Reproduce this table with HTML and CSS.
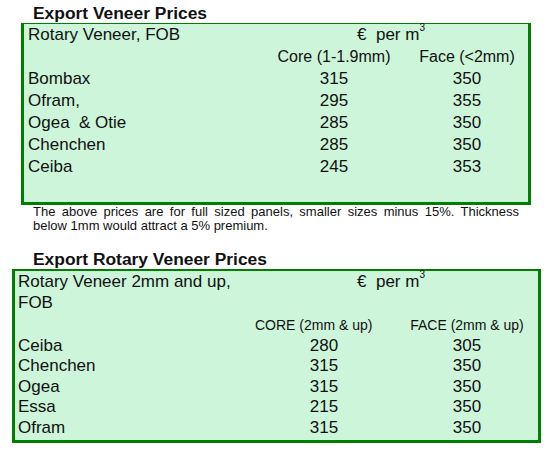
FILE: index.html
```html
<!DOCTYPE html>
<html>
<head>
<meta charset="utf-8">
<link rel="stylesheet" href="styles.css">
</head>
<body>
<div class="page">
  <h2 class="title title-first">Export Veneer Prices</h2>
  <div class="box box-one">
    <div class="label">Rotary Veneer, FOB</div>
    <div class="unit">€ &nbsp;per m<sup>3</sup></div>

    <div class="label"></div>
    <div class="colhead">Core (1-1.9mm)</div>
    <div class="colhead c3">Face (&lt;2mm)</div>

    <div class="label">Bombax</div><div class="num">315</div><div class="num c3">350</div>
    <div class="label">Ofram,</div><div class="num">295</div><div class="num c3">355</div>
    <div class="label">Ogea &nbsp;&amp; Otie</div><div class="num">285</div><div class="num c3">350</div>
    <div class="label">Chenchen</div><div class="num">285</div><div class="num c3">350</div>
    <div class="label">Ceiba</div><div class="num">245</div><div class="num c3">353</div>
  </div>
  <p class="note">The above prices are for full sized panels, smaller sizes minus 15%. Thickness below 1mm would attract a 5% premium.</p>

  <h2 class="title title-second">Export Rotary Veneer Prices</h2>
  <div class="box box-two">
    <div class="label">Rotary Veneer 2mm and up, FOB</div>
    <div class="unit">€ &nbsp;per m<sup>3</sup></div>

    <div class="label"></div>
    <div class="colhead left">CORE (2mm &amp; up)</div>
    <div class="colhead c3">FACE (2mm &amp; up)</div>

    <div class="label">Ceiba</div><div class="num">280</div><div class="num c3">305</div>
    <div class="label">Chenchen</div><div class="num">315</div><div class="num c3">350</div>
    <div class="label">Ogea</div><div class="num">315</div><div class="num c3">350</div>
    <div class="label">Essa</div><div class="num">215</div><div class="num c3">350</div>
    <div class="label">Ofram</div><div class="num">315</div><div class="num c3">350</div>
  </div>
</div>
</body>
</html>
```
FILE: styles.css
```css
html, body {
  margin: 0;
  padding: 0;
  background: #ffffff;
}

body {
  font-family: "Liberation Sans", Arial, sans-serif;
  color: #111111;
  width: 552px;
  height: 455px;
  overflow: hidden;
}

.page {
  display: flex;
  flex-direction: column;
  align-items: flex-start;
}

.title {
  margin: 0;
  font-size: 17.4px;
  font-weight: bold;
  margin-left: 33px;
  color: #111111;
}

.title-first {
  padding-top: 3px;
  line-height: 20px;
}

.title-second {
  margin-top: 17px;
  line-height: 19px;
}

.box {
  display: grid;
  background: #ccf5d9;
  border-style: solid;
  border-color: #007f00;
  box-sizing: border-box;
  font-size: 17px;
}

.box sup {
  font-size: 10px;
  line-height: 0;
  vertical-align: 9px;
}

.box-one {
  margin-left: 21px;
  width: 510px;
  border-width: 1px 3px 3px 3px;
  grid-template-columns: 244px 132px 1fr;
  grid-auto-rows: 22px;
  line-height: 22px;
  padding-bottom: 24px;
}

.box-one .label {
  padding-left: 4px;
}

.box-one .unit {
  grid-column: 2 / 4;
  text-align: center;
  padding-right: 14px;
}

.box-one .colhead {
  font-size: 16px;
  text-align: center;
}

.num {
  text-align: center;
}

.box-one .c3 {
  padding-left: 6px;
}

.box-two {
  margin-left: 12px;
  width: 529px;
  border-width: 2px 3px 3px 3px;
  grid-template-columns: 240px 138px 1fr;
  line-height: 20.5px;
  padding-bottom: 2px;
}

.box-two .label {
  padding-left: 3px;
}

.box-two > .label:first-child {
  line-height: 21px;
  padding-right: 8px;
}

.box-two .unit {
  grid-column: 2 / 4;
  text-align: center;
  padding-right: 11px;
  line-height: 21px;
}

.box-two .colhead {
  font-size: 14px;
  padding-top: 2px;
  text-align: center;
}

.box-two .colhead.left {
  text-align: left;
}

.box-two .c3 {
  padding-left: 3px;
}

.note {
  margin: 0 0 0 33px;
  width: 486px;
  font-size: 13px;
  line-height: 14px;
  text-align: justify;
}
```
